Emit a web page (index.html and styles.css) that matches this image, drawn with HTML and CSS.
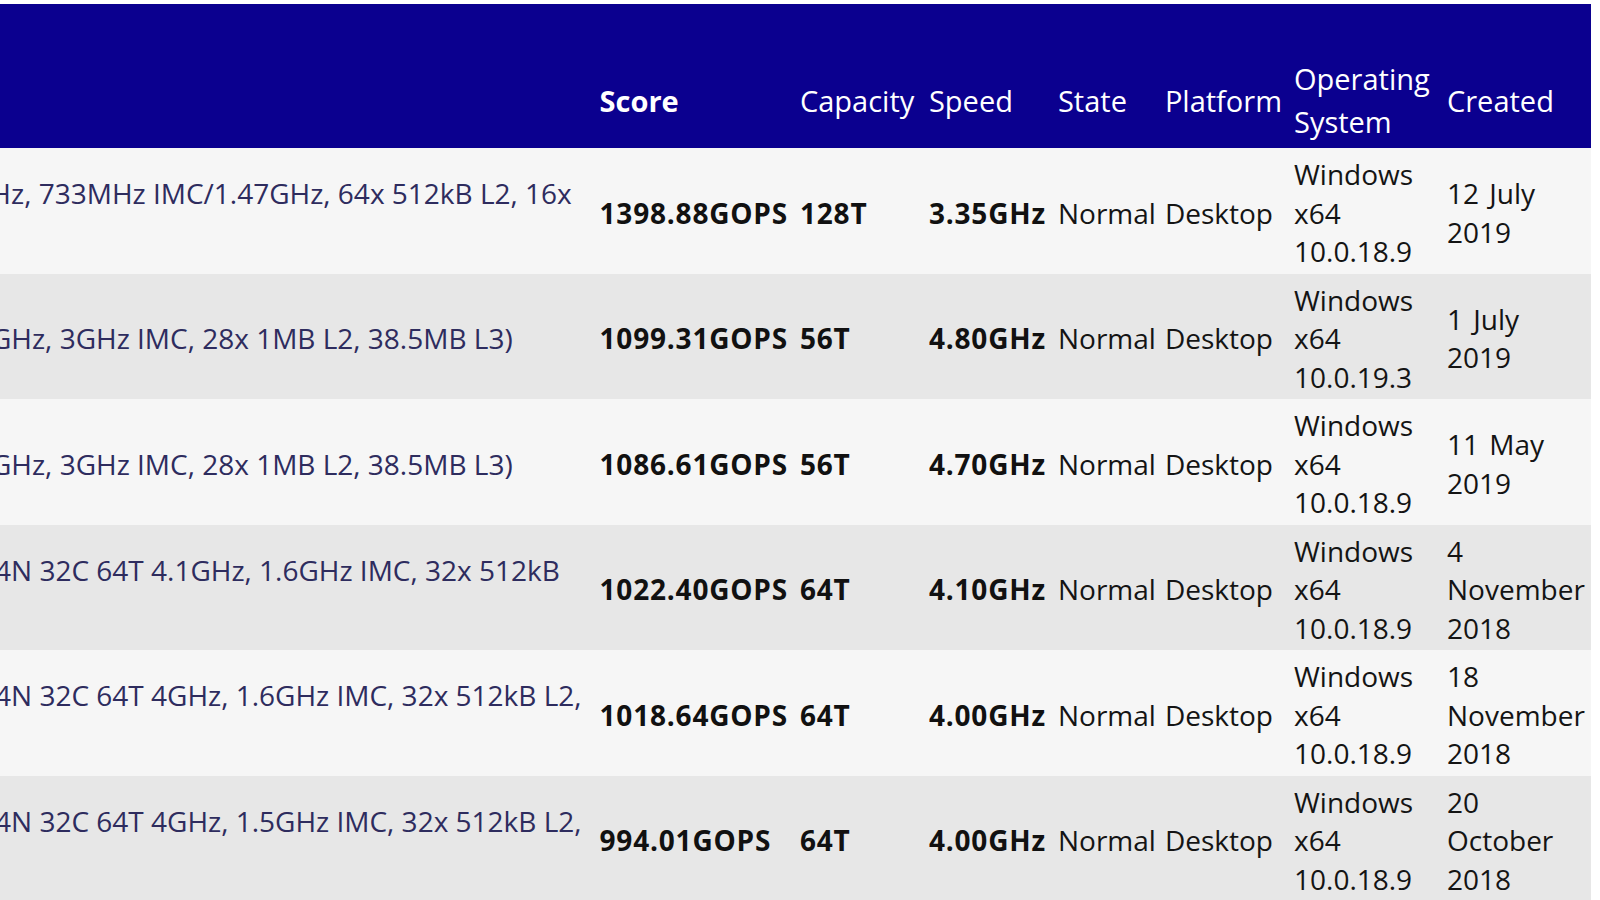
FILE: index.html
```html
<!DOCTYPE html>
<html lang="en">
<head>
<meta charset="utf-8">
<title>Ranker</title>
<link rel="stylesheet" href="styles.css">
</head>
<body>
<div class="viewport">
  <table class="ranker">
    <thead>
      <tr>
        <th class="c-desc">Processor</th>
        <th class="c-score strong">Score</th>
        <th class="c-cap">Capacity</th>
        <th class="c-speed">Speed</th>
        <th class="c-state">State</th>
        <th class="c-plat">Platform</th>
        <th class="c-os">Operating System</th>
        <th class="c-created">Created</th>
      </tr>
    </thead>
    <tbody>
      <tr>
        <td class="c-desc"><a href="#">AMD Eng Sample: 100-000000011-11 (64C 128T 3.35GHz, 733MHz IMC/1.47GHz, 64x 512kB L2, 16x<br>16MB L3)</a></td>
        <td class="c-score strong">1398.88GOPS</td>
        <td class="c-cap strong">128T</td>
        <td class="c-speed strong">3.35GHz</td>
        <td class="c-state">Normal</td>
        <td class="c-plat">Desktop</td>
        <td class="c-os">Windows x64 10.0.18.9</td>
        <td class="c-created">12 July 2019</td>
      </tr>
      <tr>
        <td class="c-desc"><a href="#">Intel(R) Xeon(R) W-3175X CPU @ 3.10GHz (28C 56T 4.8GHz, 3GHz IMC, 28x 1MB L2, 38.5MB L3)</a></td>
        <td class="c-score strong">1099.31GOPS</td>
        <td class="c-cap strong">56T</td>
        <td class="c-speed strong">4.80GHz</td>
        <td class="c-state">Normal</td>
        <td class="c-plat">Desktop</td>
        <td class="c-os">Windows x64 10.0.19.3</td>
        <td class="c-created">1 July 2019</td>
      </tr>
      <tr>
        <td class="c-desc"><a href="#">Intel(R) Xeon(R) W-3175X CPU @ 3.10GHz (28C 56T 4.7GHz, 3GHz IMC, 28x 1MB L2, 38.5MB L3)</a></td>
        <td class="c-score strong">1086.61GOPS</td>
        <td class="c-cap strong">56T</td>
        <td class="c-speed strong">4.70GHz</td>
        <td class="c-state">Normal</td>
        <td class="c-plat">Desktop</td>
        <td class="c-os">Windows x64 10.0.18.9</td>
        <td class="c-created">11 May 2019</td>
      </tr>
      <tr>
        <td class="c-desc"><a href="#">AMD Ryzen Threadripper 2990WX 32-Core Processor (4N 32C 64T 4.1GHz, 1.6GHz IMC, 32x 512kB<br>L2, 8x 8MB L3)</a></td>
        <td class="c-score strong">1022.40GOPS</td>
        <td class="c-cap strong">64T</td>
        <td class="c-speed strong">4.10GHz</td>
        <td class="c-state">Normal</td>
        <td class="c-plat">Desktop</td>
        <td class="c-os">Windows x64 10.0.18.9</td>
        <td class="c-created">4 November 2018</td>
      </tr>
      <tr>
        <td class="c-desc"><a href="#">AMD Ryzen Threadripper 2990WX 32-Core Processor (4N 32C 64T 4GHz, 1.6GHz IMC, 32x 512kB L2,<br>8x 8MB L3)</a></td>
        <td class="c-score strong">1018.64GOPS</td>
        <td class="c-cap strong">64T</td>
        <td class="c-speed strong">4.00GHz</td>
        <td class="c-state">Normal</td>
        <td class="c-plat">Desktop</td>
        <td class="c-os">Windows x64 10.0.18.9</td>
        <td class="c-created">18 November 2018</td>
      </tr>
      <tr>
        <td class="c-desc"><a href="#">AMD Ryzen Threadripper 2990WX 32-Core Processor (4N 32C 64T 4GHz, 1.5GHz IMC, 32x 512kB L2,<br>8x 8MB L3)</a></td>
        <td class="c-score strong">994.01GOPS</td>
        <td class="c-cap strong">64T</td>
        <td class="c-speed strong">4.00GHz</td>
        <td class="c-state">Normal</td>
        <td class="c-plat">Desktop</td>
        <td class="c-os">Windows x64 10.0.18.9</td>
        <td class="c-created">20 October 2018</td>
      </tr>
    </tbody>
  </table>
</div>
</body>
</html>
```
FILE: styles.css
```css
html, body {
  margin: 0;
  padding: 0;
  background: #ffffff;
  overflow: hidden;
}

body {
  font-family: "Open Sans", "Noto Sans", sans-serif;
  color: #141414;
}

.viewport {
  display: flex;
  justify-content: flex-end;
  width: 1591px;
  padding-top: 4px;
  overflow: hidden;
}

.ranker {
  flex: none;
  border-collapse: collapse;
  border-spacing: 0;
}

.ranker th {
  background: #0b008f;
  color: #ffffff;
  font-size: 29px;
  line-height: 43px;
  font-weight: 400;
  text-align: left;
  vertical-align: middle;
  padding: 53px 6px 5px;
}

.ranker th.strong {
  font-weight: 700;
}

.ranker td {
  font-size: 28px;
  line-height: 38.5px;
  padding: 7px 6px 3px;
  vertical-align: middle;
  text-align: left;
}

.ranker tbody tr:nth-child(odd) td {
  background: #f6f6f6;
}

.ranker tbody tr:nth-child(even) td {
  background: #e7e7e7;
}

.ranker td.strong {
  font-weight: 700;
  letter-spacing: 0.8px;
  color: #111111;
}

.c-desc {
  white-space: nowrap;
  padding-right: 12px !important;
}

.c-desc a {
  color: #2e2c5e;
  text-decoration: none;
}

.c-score { width: 186px; }
.c-cap { width: 117px; }
.c-speed { width: 116px; }
.c-state { width: 94px; }
.c-plat { width: 117px; }
.c-os { width: 141px; }
.c-created { width: 138px; }

.ranker th.c-state,
.ranker td.c-state {
  padding-right: 3px;
}

td.c-created {
  word-spacing: 3px;
}
```
